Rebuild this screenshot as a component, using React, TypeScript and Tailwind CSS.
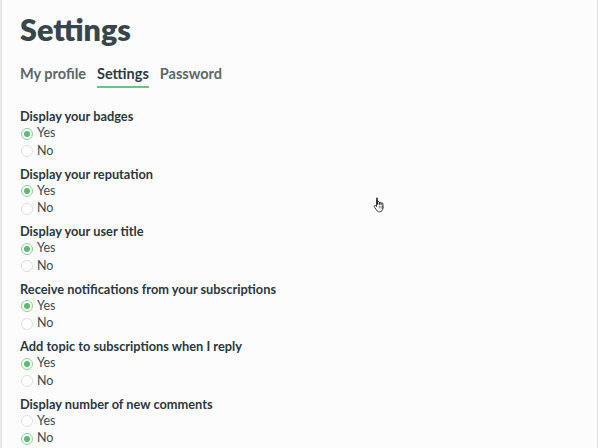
import { useState } from "react";

const settings = [
  { label: "Display your badges", value: "yes" },
  { label: "Display your reputation", value: "yes" },
  { label: "Display your user title", value: "yes" },
  { label: "Receive notifications from your subscriptions", value: "yes" },
  { label: "Add topic to subscriptions when I reply", value: "yes" },
  { label: "Display number of new comments", value: "no" },
];

function Radio({ checked, label }: { checked: boolean; label: string }) {
  return (
    <label className="flex items-center gap-[4px] h-[17.5px] text-[12.5px] text-[#3e4a4c] cursor-pointer">
      <span
        className={`ml-[1px] w-[12px] h-[12px] rounded-full border flex items-center justify-center bg-white ${
          checked ? "border-[#8fd099]" : "border-[#dcdfe0]"
        }`}
      >
        {checked && <span className="w-[6px] h-[6px] rounded-full bg-[#5cbb6a]" />}
      </span>
      {label}
    </label>
  );
}

function HandCursor() {
  return (
    <svg
      width="12"
      height="16"
      viewBox="0 0 12 16"
      className="absolute left-[371px] top-[197px]"
    >
      <path
        d="M3.5 1.2c.6 0 1 .4 1 1v5.3V5.4c0-.5.4-.9.9-.9s.9.4.9.9v2.1V6c0-.5.4-.9.9-.9s.9.4.9.9v1.7-1c0-.5.4-.9.9-.9s.9.4.9.9v4.3c0 2.2-1.4 3.9-3.6 3.9H6.3c-1.2 0-2-.6-2.6-1.6L1.3 9.8c-.3-.5-.1-1.1.4-1.3.4-.2.9 0 1.2.3l.6.9V2.2c0-.6.4-1 1-1z"
        fill="#fff"
        stroke="#222"
        strokeWidth="0.9"
        strokeLinejoin="round"
      />
      <path d="M6.3 8.5v3M8.1 8.5v3M9.9 8.5v3" stroke="#222" strokeWidth="0.6" />
    </svg>
  );
}

export default function App() {
  const [tab] = useState("Settings");
  return (
    <div
      className="relative w-[600px] h-[448px] overflow-hidden bg-[#fcfcfd] border-l-2 border-[#e6e6e8]"
      style={{ fontFamily: "Lato, 'Noto Sans', sans-serif" }}
    >
      <div className="absolute right-0 top-0 h-full w-[3px] bg-white border-l-[1.5px] border-[#dedee0]" />
      <div className="pl-[18px] pt-[9px]">
        <h1 className="text-[30.5px] leading-[40px] font-extrabold text-[#37464a]">
          Settings
        </h1>

        {/* Tabs */}
        <div className="flex gap-[11px] mt-[15px] text-[14.5px] font-bold">
          {["My profile", "Settings", "Password"].map((t) => (
            <div
              key={t}
              className={`pb-[3px] border-b-2 leading-[19px] ${
                t === tab
                  ? "text-[#2f3b3e] border-[#74c27e]"
                  : "text-[#5b6769] border-transparent"
              }`}
            >
              {t}
            </div>
          ))}
        </div>

        {/* Options */}
        <div className="mt-[20px] flex flex-col gap-[5.5px]">
          {settings.map((s) => (
            <div key={s.label}>
              <div className="text-[12.8px] font-bold text-[#2c383b] leading-[17px]">
                {s.label}
              </div>
              <Radio checked={s.value === "yes"} label="Yes" />
              <Radio checked={s.value === "no"} label="No" />
            </div>
          ))}
        </div>
      </div>
      <HandCursor />
    </div>
  );
}
